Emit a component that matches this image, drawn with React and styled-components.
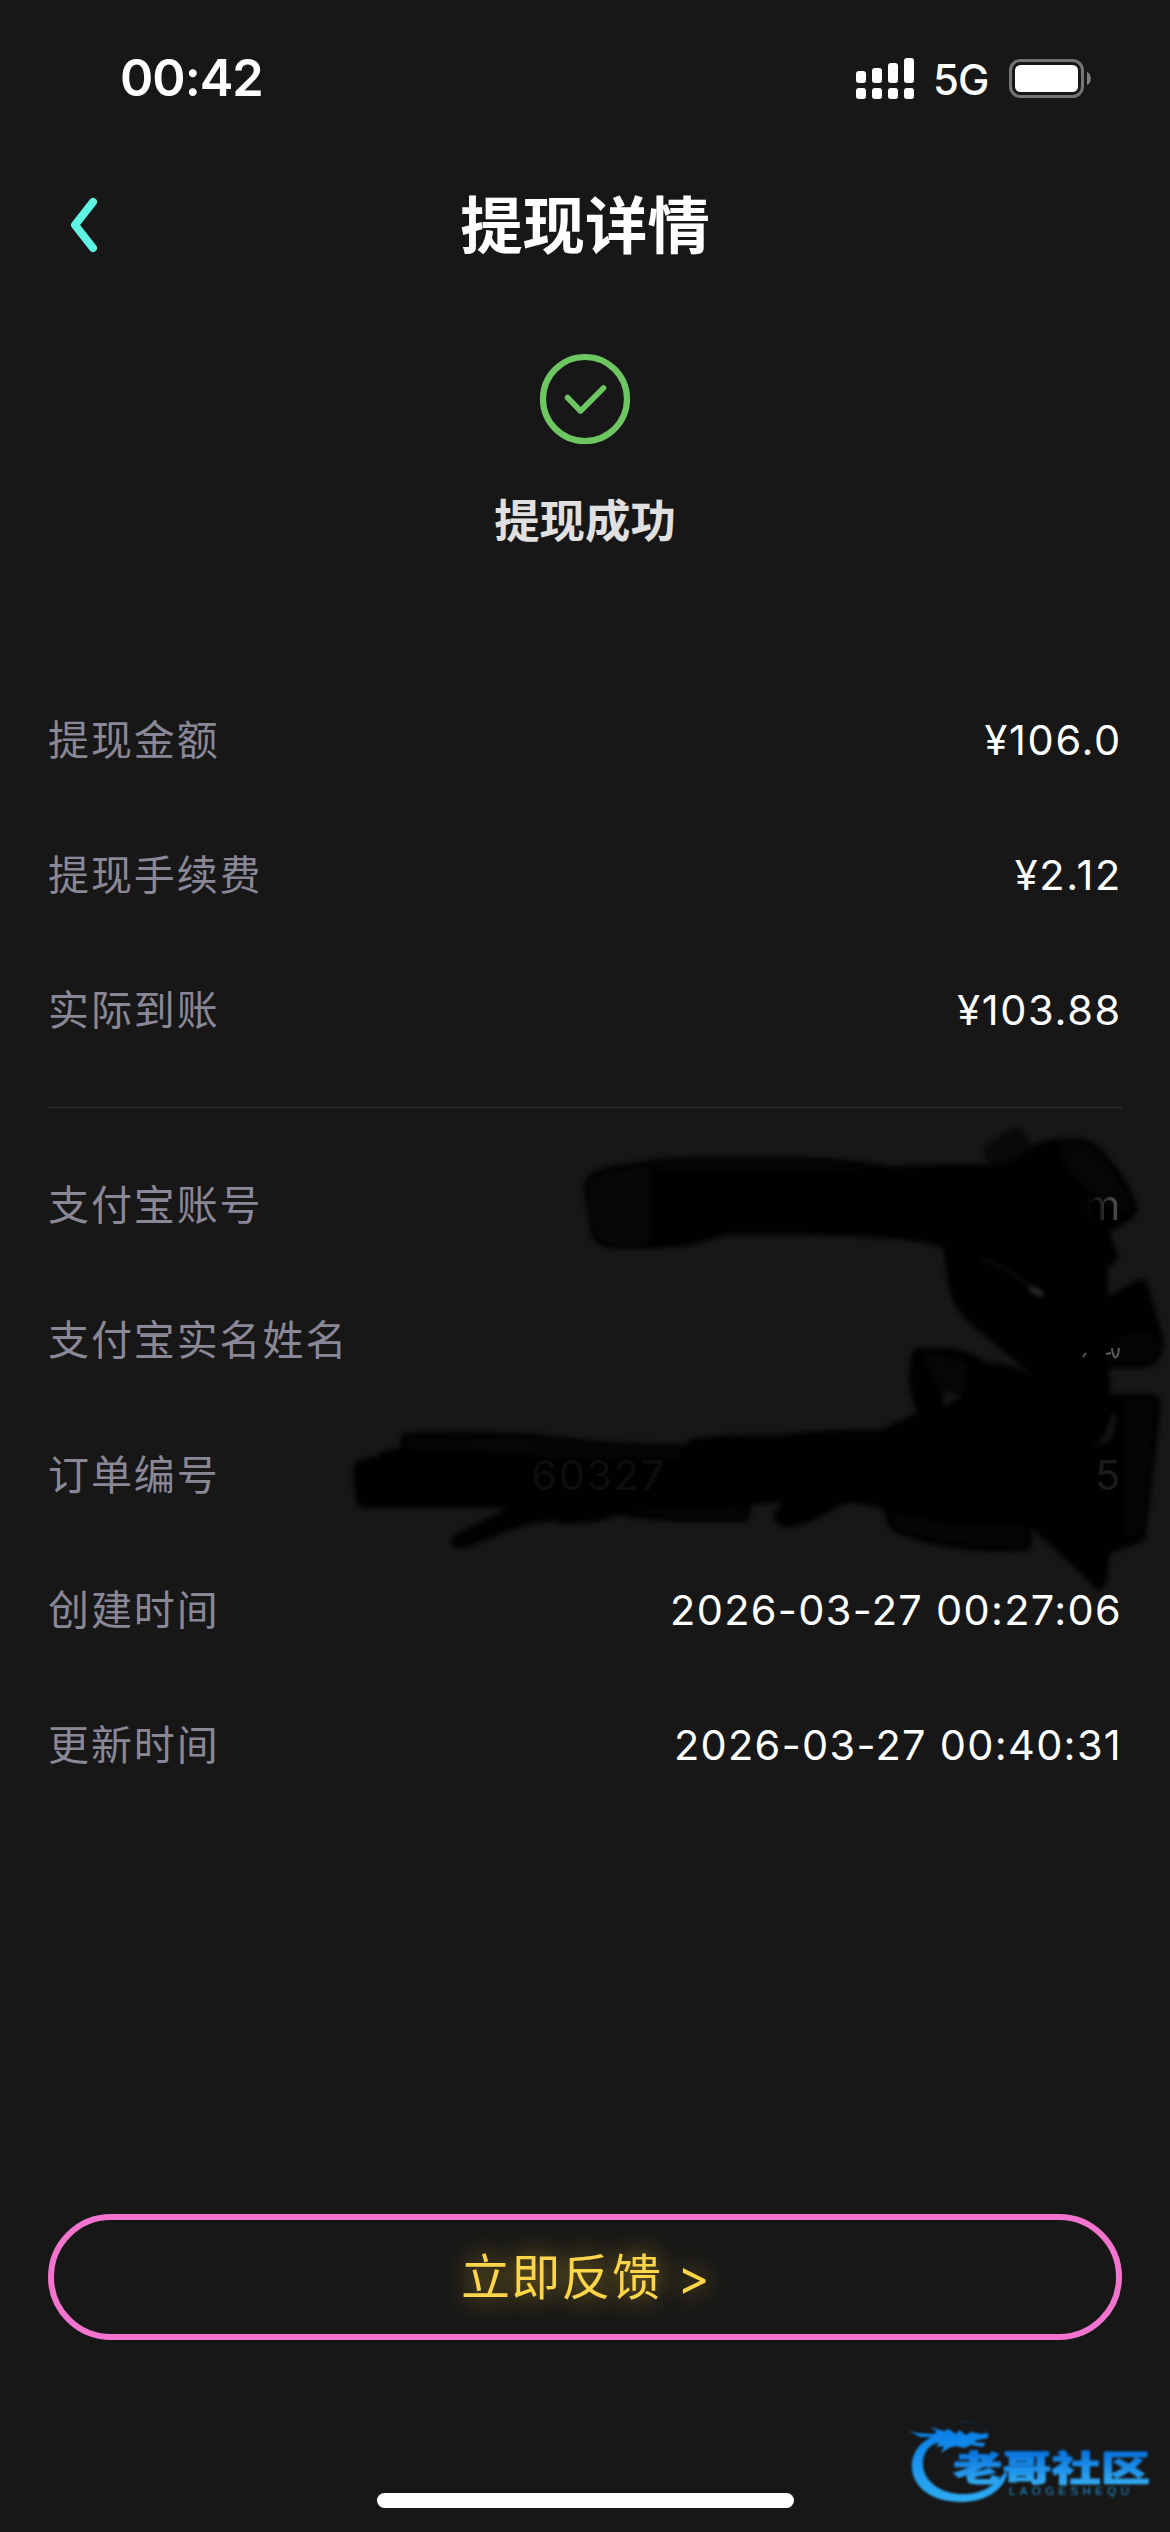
import React from "react";
import styled, { createGlobalStyle } from "styled-components";

const Global = createGlobalStyle`
  * { box-sizing: border-box; }
  body { margin: 0; background: #171717; }
`;

const Page = styled.div`
  position: relative;
  display: flex;
  flex-direction: column;
  width: 1170px;
  height: 2532px;
  overflow: hidden;
  background: #171717;
  color: #fff;
  font-family: Inter, "Noto Sans CJK SC", sans-serif;
`;

const StatusBar = styled.header`
  display: flex;
  align-items: center;
  justify-content: space-between;
  height: 156px;
  padding: 0 79px 0 120px;
`;

const Clock = styled.span`
  font-size: 50.5px;
  font-weight: 600;
  line-height: 60px;
  letter-spacing: -1px;
`;

const StatusIcons = styled.div`
  display: flex;
  align-items: center;
`;

const Network = styled.span`
  width: 74px;
  padding-left: 19px;
  font-size: 42px;
  font-weight: 500;
  line-height: 50px;
  letter-spacing: -1px;
  padding-top: 3px;
  margin-right: 21px;
`;

const TitleBar = styled.nav`
  display: grid;
  grid-template-columns: 170px 1fr 170px;
  align-items: center;
  height: 138px;
`;

const BackButton = styled.button`
  display: flex;
  padding: 0 0 0 66px;
  border: 0;
  background: none;
`;

const Title = styled.h1`
  margin: 0;
  padding-top: 4px;
  font-size: 62.4px;
  font-weight: 700;
  line-height: 90px;
  text-align: center;
`;

const Result = styled.section`
  display: flex;
  flex-direction: column;
  align-items: center;
  height: 378px;
  padding-top: 58px;
`;

const ResultText = styled.p`
  margin: 43px 0 0;
  color: #e0e0e0;
  font-size: 45.4px;
  font-weight: 600;
  line-height: 66px;
`;

const Group = styled.dl`
  display: flex;
  flex-direction: column;
  margin: ${(p) => p.$top || 0}px 48px 0;
  padding: 0 0 ${(p) => p.$bottom || 0}px;
  border-bottom: ${(p) => (p.$ruled ? "1px solid #343434" : "0")};
`;

const Row = styled.div`
  display: flex;
  align-items: center;
  justify-content: space-between;
  height: 135px;
`;

const Label = styled.dt`
  color: #8a8797;
  font-size: 41px;
  font-weight: 400;
  letter-spacing: 1.9px;
  line-height: 60px;
`;

const Value = styled.dd`
  margin: 0;
  position: relative;
  z-index: 2;
  color: ${(p) => p.$tone || "#fff"};
  font-size: 41.5px;
  font-weight: 400;
  letter-spacing: ${(p) => p.$spacing || 1.7}px;
  line-height: 60px;
`;

const Faded = styled.span`
  margin-right: 429px;
  color: #0d0d0d;
`;

const FadedEnd = styled.span`
  color: transparent;
  background: linear-gradient(80deg, #050505 20%, #484848 75%);
  background-clip: text;
`;

const Scribble = styled.svg`
  position: absolute;
  left: 340px;
  top: 1110px;
  z-index: 1;
`;

const Feedback = styled.button`
  display: flex;
  align-items: center;
  justify-content: center;
  height: 126px;
  margin: 402px 48px 0;
  padding: 2px 0 0 2px;
  border: 6px solid #f274cf;
  border-radius: 63px;
  background: none;
  color: #ffd54a;
  font: 400 49px/70px Inter, "Noto Sans CJK SC", sans-serif;
  letter-spacing: 1.3px;
  text-shadow: 0 0 26px rgba(255, 208, 50, 0.65);
`;

const Footer = styled.footer`
  display: flex;
  flex: 1;
  align-items: flex-end;
  justify-content: center;
  padding-bottom: 24px;
`;

const HomeIndicator = styled.div`
  width: 417px;
  height: 15px;
  border-radius: 8px;
  background: #fff;
`;

const Watermark = styled.svg`
  position: absolute;
  left: 880px;
  top: 2400px;
`;

const amounts = [
  ["提现金额", "¥106.0"],
  ["提现手续费", "¥2.12"],
  ["实际到账", "¥103.88"],
];

const times = [
  ["创建时间", "2026-03-27 00:27:06"],
  ["更新时间", "2026-03-27 00:40:31"],
];

function Signal() {
  const tops = [13, 10, 5, 0];
  return (
    <svg width="58" height="41" viewBox="0 0 58 41" fill="#fff">
      {tops.map((top, i) => (
        <g key={top}>
          <rect x={i * 16} y={top} width="10" height={25 - top} rx="3" />
          <rect x={i * 16} y="30" width="10" height="11" rx="3" />
        </g>
      ))}
    </svg>
  );
}

function Battery() {
  return (
    <svg width="82" height="39" viewBox="0 0 82 39">
      <rect x="1.5" y="1.5" width="72" height="36" rx="10" fill="none" stroke="#747474" strokeWidth="3" />
      <rect x="6" y="6" width="63" height="27" rx="5.5" fill="#fff" />
      <path d="M78 13c5 2 5 11 0 13z" fill="#808080" />
    </svg>
  );
}

function InkCover() {
  return (
    <Scribble width="830" height="500" viewBox="340 1110 830 500">
      <defs>
        <filter id="soft" x="-5%" y="-5%" width="110%" height="110%" colorInterpolationFilters="sRGB">
          <feGaussianBlur stdDeviation="2.6" />
        </filter>
        <filter id="softer" x="-5%" y="-5%" width="110%" height="110%" colorInterpolationFilters="sRGB">
          <feGaussianBlur stdDeviation="3.5" />
        </filter>
      </defs>
      <g filter="url(#soft)">
        <path fill="#090909" d="M982 1148L1013 1127Q1019 1126 1022 1131L1036 1152L1030 1176L992 1176Z" />
        <path
          fill="#010101"
          d="M584 1187Q586 1174 600 1170Q630 1158 770 1158Q850 1158 891 1167Q933 1163 992 1165Q1012 1163 1020 1155Q1038 1139 1060 1139H1081Q1098 1142 1108 1158Q1132 1185 1137 1208Q1138 1218 1109 1232L1118 1256Q1118 1262 1108 1267V1296L1140 1279Q1146 1277 1149 1290L1163 1337Q1164 1368 1138 1368H1109L1110 1394H1148Q1162 1394 1160 1410L1145 1538Q1144 1542 1110 1553Q1108 1590 1100 1590Q1094 1590 1086 1578L1031 1528V1546Q1030 1551 1018 1551H986Q930 1548 892 1530Q887 1525 885 1510Q855 1500 840 1505Q810 1526 787 1527Q773 1527 774 1514L782 1502L750 1505V1517Q749 1521 740 1521H705Q650 1521 620 1515Q592 1524 578 1523Q560 1525 554 1521Q525 1523 504 1533L464 1548Q450 1549 451 1541Q452 1536 470 1527L508 1508H368Q358 1508 356 1502L353 1468Q353 1460 378 1456Q381 1449 401 1448V1438Q402 1433 411 1433Q520 1431 560 1438Q610 1445 685 1445L689 1440Q710 1434 779 1435Q820 1429 880 1430L917 1413Q909 1390 909 1380L911 1356Q913 1348 922 1348H946Q970 1350 988 1363Q1013 1362 1035 1377L968 1322Q951 1304 948 1285L943 1247Q900 1237 867 1237Q770 1233 727 1235L690 1245Q668 1249 645 1248H611Q596 1245 593 1237Z"
        />
      </g>
      <g filter="url(#softer)">
        <path fill="#070707" d="M586 1187Q590 1176 610 1170L649 1164V1246H615Q599 1243 595 1235Z" />
        <path fill="#050505" d="M649 1160Q770 1156 850 1163L880 1170H649Z" />
        <path fill="#060606" d="M1060 1141H1081L1103 1156L1133 1202L1128 1216Q1100 1202 1065 1170Z" />
        <path fill="#060606" d="M920 1352Q950 1352 968 1364L967 1394L944 1402Z" />
        <path fill="#060606" d="M888 1512L960 1526L1028 1527V1547Q960 1550 894 1528Z" />
        <path fill="#050505" d="M1125 1400H1156L1143 1534L1126 1538Z" />
        <path fill="#050505" d="M1112 1340L1140 1330L1160 1339L1154 1362L1112 1364Z" />
        <path fill="#060606" d="M405 1435H525L610 1445L680 1448L680 1458L560 1458L406 1448Z" />
        <path fill="#050505" d="M630 1508L746 1505V1518H700Q650 1518 625 1511Z" />
      </g>
      <g filter="url(#soft)">
        <path fill="#161616" d="M944 1392L962 1396L943 1407Z" />
        <path fill="#141414" d="M1112 1414L1117 1414L1112 1440L1092 1448L1105 1435Z" />
        <path d="M980 1258Q1010 1268 1030 1288l12 6" fill="none" stroke="#101010" strokeWidth="3" strokeLinecap="round" />
        <path d="M1032 1289l9 5" stroke="#343434" strokeWidth="5" strokeLinecap="round" />
      </g>
      <path d="M1106 1354l5-1M1112 1348c1 13 6 12 7 0M1083 1357l3-4" fill="none" stroke="#5e5e5e" strokeWidth="2" />
    </Scribble>
  );
}

function Logo() {
  return (
    <Watermark width="290" height="132" viewBox="0 0 290 132">
      <defs>
        <linearGradient id="ring" x1="0" y1="22" x2="0" y2="102" gradientUnits="userSpaceOnUse">
          <stop offset="0" stopColor="#087be8" />
          <stop offset="1" stopColor="#2dacf2" />
        </linearGradient>
        <linearGradient id="word" x1="0" y1="52" x2="0" y2="84" gradientUnits="userSpaceOnUse">
          <stop offset="0" stopColor="#0874df" />
          <stop offset="1" stopColor="#32aaf2" />
        </linearGradient>
        <filter id="haze" colorInterpolationFilters="sRGB"><feGaussianBlur stdDeviation="0.8" /></filter>
      </defs>
      <g filter="url(#haze)">
        <path
          fill="url(#ring)"
          d="M61 34C42 38 31 52 32 68C33 88 53 102 81 102C103 102 122 92 127 75L126 71C114 87 102 93 86 94C61 95 43 81 43 64C43 50 52 41 66 42Z"
        />
        <path
          fill="url(#ring)"
          d="M29 31L37 33L53 34L57 32L50 27L64 31L69 29L76 34L79 30L86 35L91 32L101 34L108 33L108 38L97 40L94 42L104 43L106 42L103 47L91 45L84 48L76 46L69 48L61 53L64 46L56 47L62 39L54 37L40 37Z"
        />
        <path d="M78 21Q103 20 107 33M59 24L73 31" fill="none" stroke="#12304a" strokeWidth="1" />
        <text
          x="73" y="81" textLength="197" lengthAdjust="spacingAndGlyphs"
          fontFamily="Noto Sans CJK SC, sans-serif" fontSize="35" fontWeight="900"
          fill="url(#word)" stroke="url(#word)" strokeWidth="0.8"
        >老哥社区</text>
        <text
          x="129" y="94.5" textLength="120" lengthAdjust="spacing"
          fontFamily="Liberation Sans, sans-serif" fontSize="11.5" fill="#258fce"
        >LAOGESHEQU</text>
      </g>
    </Watermark>
  );
}

export default function App() {
  return (
    <Page>
      <Global />
      <StatusBar>
        <Clock>00:42</Clock>
        <StatusIcons>
          <Signal />
          <Network>5G</Network>
          <Battery />
        </StatusIcons>
      </StatusBar>
      <TitleBar>
        <BackButton aria-label="返回">
          <svg width="36" height="60" viewBox="0 0 36 60" fill="none" stroke="#5ff5e5" strokeWidth="8" strokeLinecap="round" strokeLinejoin="round">
            <path d="M27 7L9 30L27 53" />
          </svg>
        </BackButton>
        <Title>提现详情</Title>
      </TitleBar>
      <Result>
        <svg width="94" height="94" viewBox="0 0 94 94" fill="none" stroke="#6dc662" strokeLinecap="round" strokeLinejoin="round">
          <circle cx="47" cy="47" r="42" strokeWidth="6.2" />
          <path d="M29.5 45.5L42.5 59L65.5 36" strokeWidth="5.6" />
        </svg>
        <ResultText>提现成功</ResultText>
      </Result>
      <Group $ruled $bottom={30}>
        {amounts.map(([label, value]) => (
          <Row key={label}>
            <Label>{label}</Label>
            <Value>{value}</Value>
          </Row>
        ))}
      </Group>
      <Group $top={29}>
        <Row>
          <Label>支付宝账号</Label>
          <Value><FadedEnd>m</FadedEnd></Value>
        </Row>
        <Row>
          <Label>支付宝实名姓名</Label>
        </Row>
        <Row>
          <Label>订单编号</Label>
          <Value $tone="#1b1b1b"><Faded>60327</Faded>5</Value>
        </Row>
        {times.map(([label, value]) => (
          <Row key={label}>
            <Label>{label}</Label>
            <Value $spacing={1.3}>{value}</Value>
          </Row>
        ))}
      </Group>
      <Feedback>立即反馈 &gt;</Feedback>
      <Footer>
        <HomeIndicator />
      </Footer>
      <InkCover />
      <Logo />
    </Page>
  );
}
